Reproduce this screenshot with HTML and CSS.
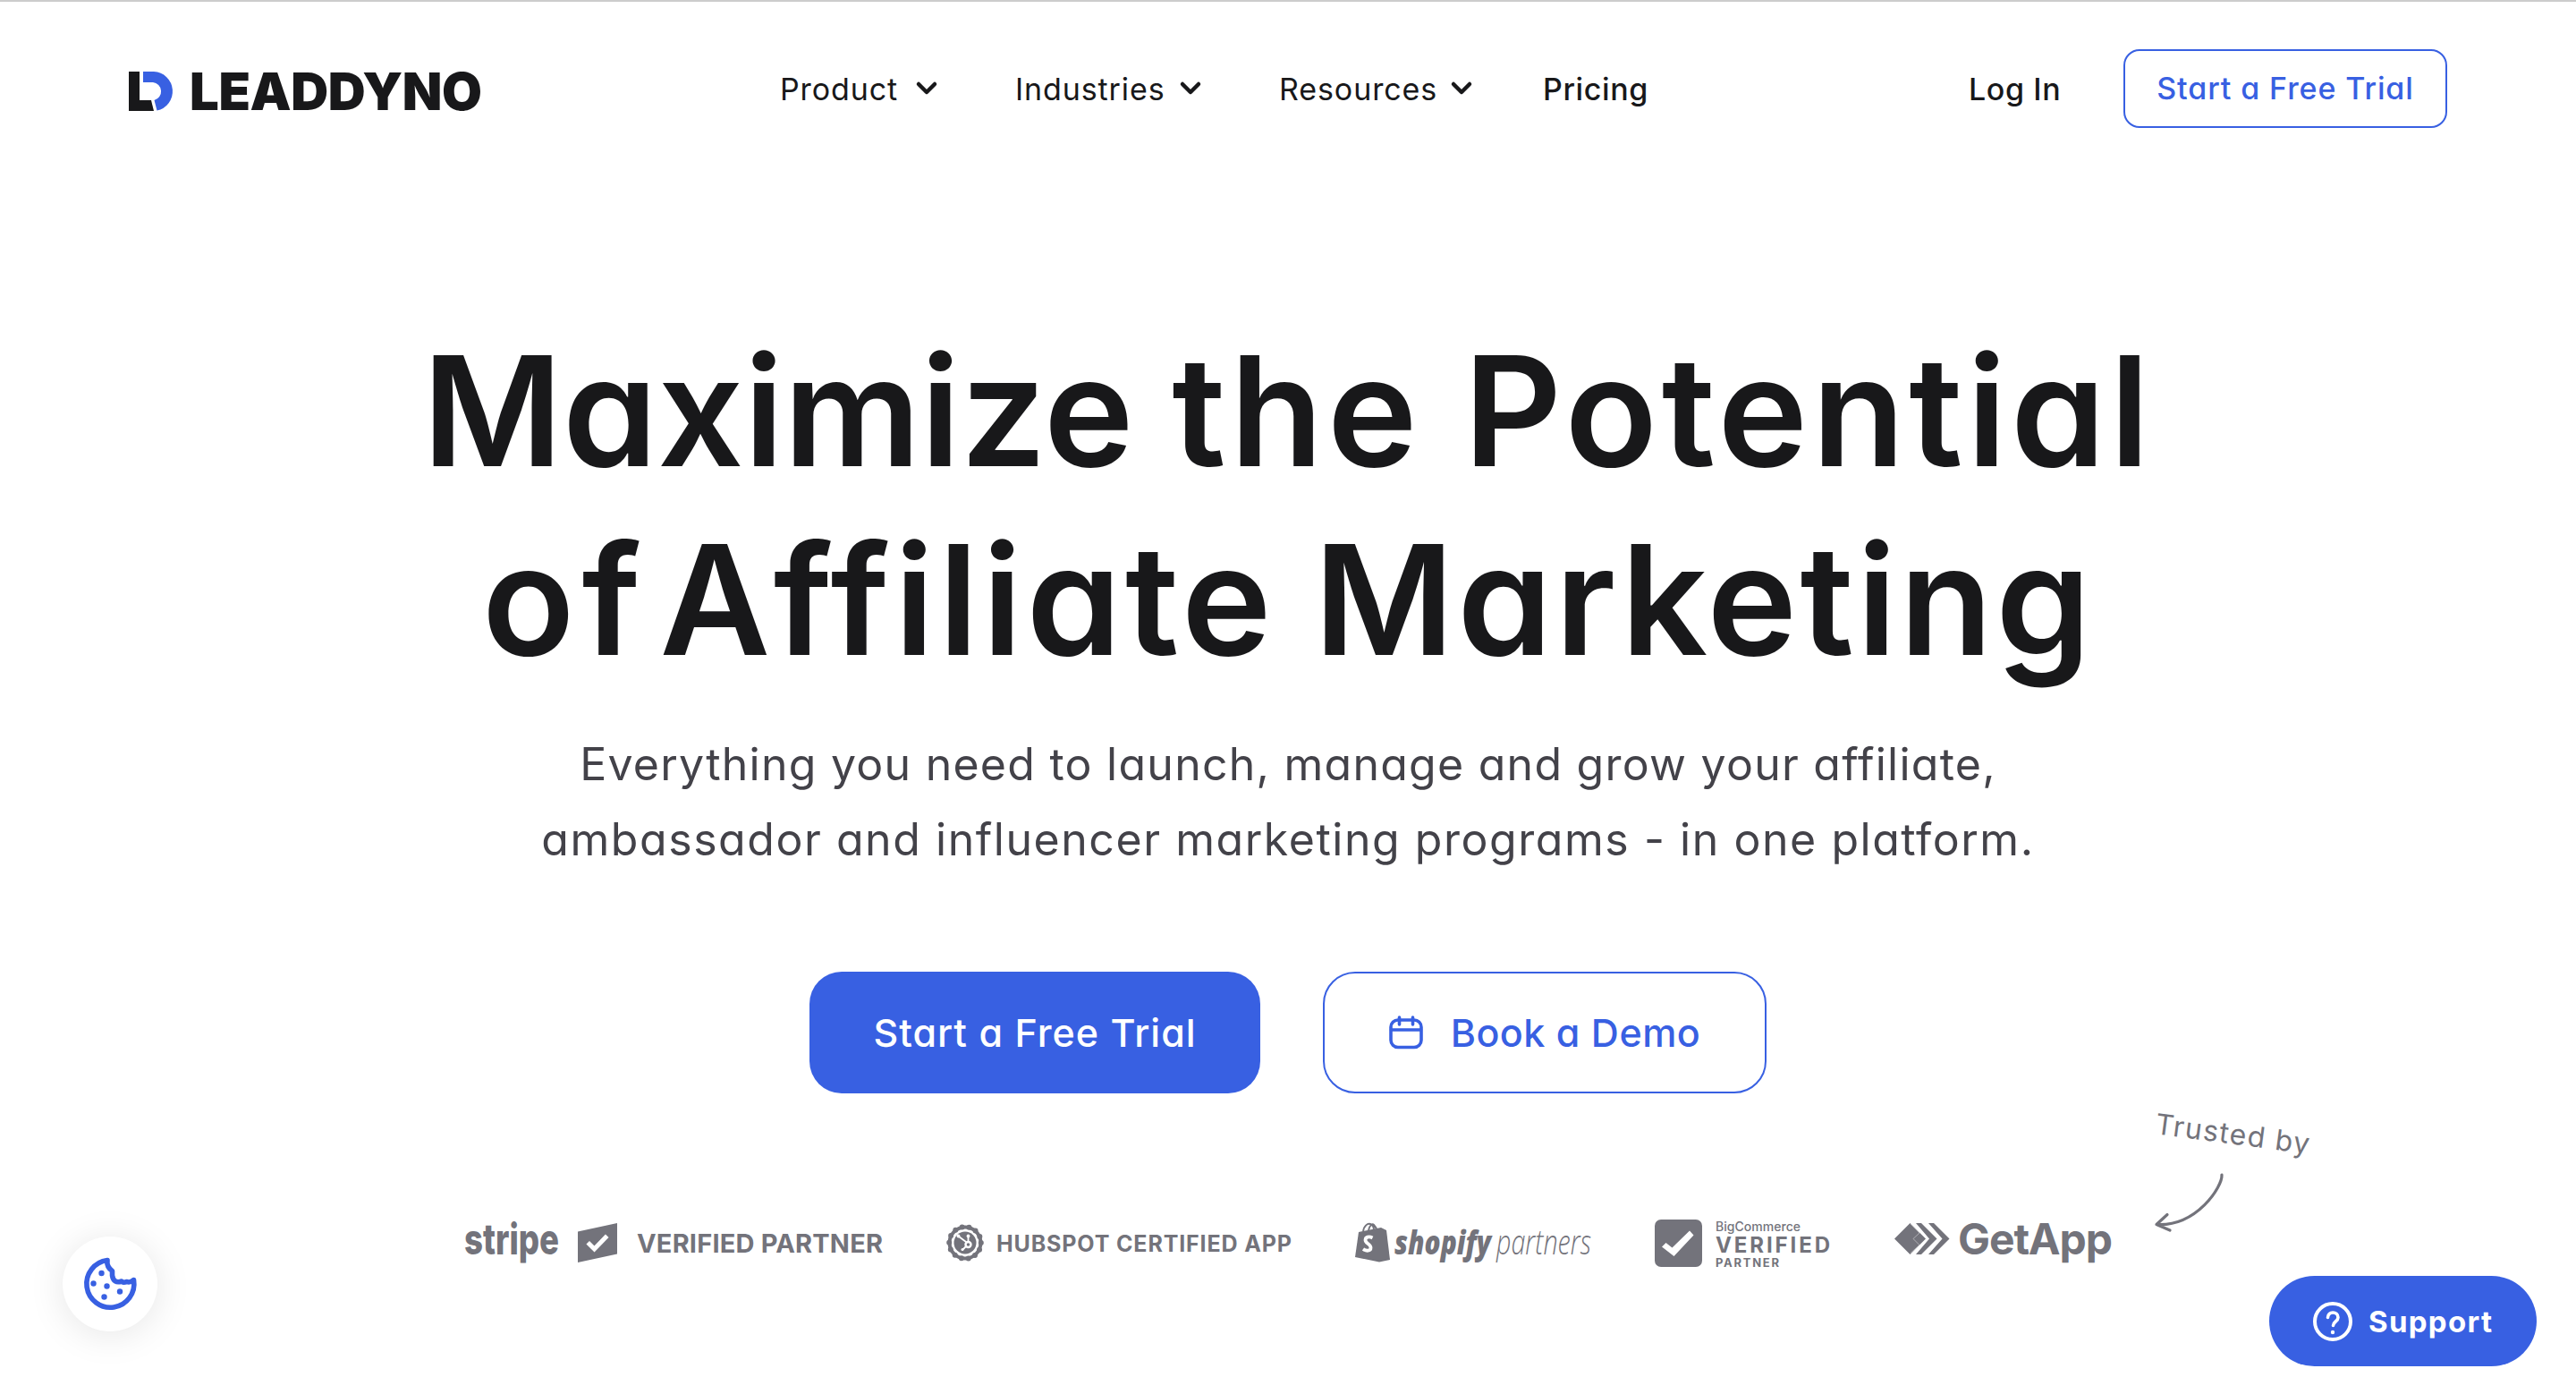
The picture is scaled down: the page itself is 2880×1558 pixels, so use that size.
FILE: index.html
```
<!DOCTYPE html>
<html lang="en">
<head>
  <meta charset="UTF-8">
  <title>LeadDyno</title>
  <link rel="stylesheet" href="styles.css">
</head>
<body>
  <header class="header">
    <a class="logo">
      <svg width="400" height="60" viewBox="0 0 400 60">
        <path fill="#18181a" d="M0 8h12v32h13l3 12H0z"/>
        <path fill="#3860e2" d="M16 8h12a22 22 0 0 1 3.500 43.500L28.500 40A10.200 10.200 0 0 0 27 20H16z"/>
        <text class="logo-text" x="68" y="51" textLength="327">LEADDYNO</text>
      </svg>
    </a>

    <nav class="nav">
      <a class="nav-item product">Product
        <svg class="chevron" width="24" height="16" viewBox="0 0 24 16"><path d="M3 3l9 9 9-9"/></svg>
      </a>
      <a class="nav-item industries">Industries
        <svg class="chevron" width="24" height="16" viewBox="0 0 24 16"><path d="M3 3l9 9 9-9"/></svg>
      </a>
      <a class="nav-item resources">Resources
        <svg class="chevron" width="24" height="16" viewBox="0 0 24 16"><path d="M3 3l9 9 9-9"/></svg>
      </a>
      <a class="nav-item pricing">Pricing</a>
    </nav>

    <div class="account">
      <a class="login">Log In</a>
      <a class="btn-small">Start a Free Trial</a>
    </div>
  </header>

  <main class="hero">
    <h1 class="title">Maximize <span class="wide">the Potential</span><br><span class="of">of</span> <span class="wide">Affiliate</span> <span class="semi-wide">Marketing</span></h1>
    <p class="subtitle">Everything you need to launch, manage and grow your affiliate,<br><span class="subtitle-wide">ambassador and influencer marketing programs - in one platform.</span></p>

    <div class="actions">
      <a class="btn btn-primary">Start a Free Trial</a>
      <a class="btn btn-outline">
        <svg width="38" height="38" viewBox="0 0 38 38" fill="none" stroke="#3860e2" stroke-width="3.600" stroke-linecap="round">
          <rect x="2" y="5" width="34" height="30.500" rx="8"/>
          <path d="M2.500 16h33M11.500 2v8M26.500 2v8"/>
        </svg>
        <span>Book a Demo</span>
      </a>
    </div>

    <div class="partners">
      <!-- Stripe -->
      <svg width="467" height="60" viewBox="0 0 467 60">
        <text class="stripe" x="-1" y="42" textLength="106" lengthAdjust="spacingAndGlyphs">stripe</text>
        <path d="M126 16.500l44-9.500v34.500L126 51z"/>
        <path class="check" d="M139 30.500l5.500 5.500 12.500-13" stroke-width="5"/>
        <text class="verified" x="192" y="40" textLength="275">VERIFIED PARTNER</text>
      </svg>
      <!-- HubSpot -->
      <svg width="386" height="60" viewBox="0 0 386 60">
        <circle cx="21" cy="29" r="17.400" fill="none" stroke="#73737b" stroke-width="4"/>
        <circle cx="21" cy="29" r="17.800" fill="none" stroke="#73737b" stroke-width="6" stroke-linecap="round" stroke-dasharray="0 7.989"/>
        <circle cx="21" cy="29" r="12.500"/>
        <g fill="none" stroke="#fff" stroke-width="1.800" stroke-linecap="round">
          <path d="M14 22l8 6M24.500 28v-6M22 33l-3.500 3.500"/>
          <circle cx="24.500" cy="31" r="3" stroke-width="2.400"/>
        </g>
        <circle cx="13.500" cy="21.500" r="1.900" fill="#fff"/>
        <circle cx="24.500" cy="21.500" r="1.900" fill="#fff"/>
        <circle cx="18" cy="36.500" r="1.500" fill="#fff"/>
        <text class="hubspot" x="56" y="39" textLength="330">HUBSPOT CERTIFIED APP</text>
      </svg>
      <!-- Shopify -->
      <svg width="264" height="60" viewBox="0 0 264 60">
        <path d="M4 17l25-5 6 3 4 33-12 2.500L0 45z"/>
        <path d="M9 16c1-6 5-9 8-8s4 3 4 7M15 15c1-5 4-8 6-6s3 3 3 6" fill="none" stroke="#73737b" stroke-width="2"/>
        <path d="M19.500 23.500c-4-2-8-1-8 2.500 0 4 6 4 6 8.500 0 4-5 4-8.500 1.500" fill="none" stroke="#fff" stroke-width="3.800"/>
        <text class="shopify" x="44" y="42" textLength="108" lengthAdjust="spacingAndGlyphs">shopify</text>
        <text class="shopify-light" x="158" y="42" textLength="106" lengthAdjust="spacingAndGlyphs">partners</text>
      </svg>
      <!-- BigCommerce -->
      <svg width="197" height="60" viewBox="0 0 197 60">
        <rect x="0" y="3" width="53" height="53" rx="7"/>
        <path d="M8 33.500l4.500-4.500 7 5.500L39 15.500l4.500 5L21.500 44z" fill="#fff"/>
        <text class="bc-small" x="68" y="16" textLength="95">BigCommerce</text>
        <text class="bc-big" x="68" y="40" textLength="128">VERIFIED</text>
        <text class="bc-partner" x="68" y="55.500" textLength="71">PARTNER</text>
      </svg>
      <!-- GetApp -->
      <svg width="244" height="60" viewBox="0 0 244 60">
        <path d="M0 24.500L17.500 7 35 24.500 17.500 42z"/>
        <path d="M24 7h6l17.500 17.500L30 42h-6l15-17.500zM38 7h6l17.500 17.500L44 42h-6l15.500-17.500z"/>
        <path d="M18 8l10 10-7 6.500 7 7-10 9" fill="none" stroke="#fff" stroke-width=".7" opacity=".6"/>
        <text class="getapp" x="71" y="41.500" textLength="173">GetApp</text>
      </svg>

      <div class="trusted">
        <span class="trusted-text">Trusted by</span>
        <svg class="trusted-arrow" width="80" height="72" viewBox="0 0 80 72">
          <path d="M76 5c1 13-28 58-73 55.500M15 49.500L3 60.500l15 6.500"/>
        </svg>
      </div>
    </div>
  </main>

  <button class="cookie">
    <svg width="60" height="60" viewBox="0 0 60 60">
      <path d="M27 3.500A26.500 26.500 0 1 0 56.500 25.500Q52 29 49 27.500 44 29 43 27 34 30 32.500 20.500V15.500Q26 11 27 3.500z" fill="none" stroke="#3860e2" stroke-width="5.600" stroke-linejoin="round"/>
      <g fill="#3860e2">
        <circle cx="20.500" cy="18" r="3.200"/>
        <circle cx="11.500" cy="29.500" r="3.200"/>
        <circle cx="26.500" cy="32.500" r="3.200"/>
        <circle cx="41" cy="38.500" r="3.200"/>
        <circle cx="23.500" cy="44.500" r="3.200"/>
      </g>
    </svg>
  </button>

  <button class="support">
    <svg width="44" height="44" viewBox="0 0 44 44" fill="none" stroke="#fff" stroke-linecap="round">
      <circle cx="22" cy="22" r="20" stroke-width="4"/>
      <path d="M16.500 17.500c0-7.500 11.500-7 11.500 0 0 4.500-5.500 4.500-5.500 9" stroke-width="3.600"/>
      <circle cx="22" cy="34" r="2.200" fill="#fff" stroke="none"/>
    </svg>
    <span>Support</span>
  </button>
</body>
</html>
```
FILE: styles.css
```
* {
  box-sizing: border-box;
}

body {
  margin: 0;
  height: 1558px;
  overflow: hidden;
  position: relative;
  background: #fff;
  border-top: 2px solid #ccc;
  color: #18181a;
  font-family: Inter, "Open Sans", sans-serif;
  font-feature-settings: "cv11";
}

svg {
  overflow: visible;
}

.header {
  display: flex;
  align-items: center;
  height: 194px;
  padding: 0 144px;
  font-size: 34px;
  letter-spacing: .9px;
}

.logo {
  width: 728px;
  height: 60px;
  margin-top: 6px;
}

.logo-text {
  font-size: 58px;
  font-weight: 900;
  letter-spacing: 0;
  fill: #18181a;
}

.nav {
  display: flex;
}

.nav-item {
  display: flex;
  align-items: center;
  justify-content: space-between;
}

.product {
  width: 176px;
  margin-right: 87px;
}

.industries {
  width: 208px;
  margin-right: 87px;
}

.resources {
  width: 216px;
  margin-right: 79px;
}

.pricing {
  font-weight: 500;
  letter-spacing: .6px;
}

.chevron {
  fill: none;
  stroke: #18181a;
  stroke-width: 4.5;
  stroke-linecap: round;
  stroke-linejoin: round;
}

.account {
  display: flex;
  align-items: center;
  margin-left: auto;
  font-weight: 500;
}

.login {
  width: 173px;
  letter-spacing: .6px;
}

.btn-small {
  width: 362px;
  height: 88px;
  border: 2px solid #3860e2;
  border-radius: 18px;
  color: #3860e2;
  line-height: 83px;
  text-align: center;
}

.hero {
  padding-top: 158px;
  text-align: center;
}

.title {
  margin: 0;
  font-size: 170px;
  line-height: 211px;
  font-weight: 600;
  white-space: nowrap;
}

.title .wide {
  letter-spacing: 4.6px;
}

.title .semi-wide {
  letter-spacing: 3.4px;
}

.title .of {
  margin-right: -30px;
  letter-spacing: 8px;
}

.subtitle {
  margin: 36px 0 106px;
  font-size: 50px;
  line-height: 84px;
  letter-spacing: 1.25px;
  color: #434249;
  white-space: nowrap;
}

.subtitle-wide {
  letter-spacing: 1.55px;
}

.actions {
  display: flex;
  justify-content: center;
  gap: 70px;
}

.btn {
  display: flex;
  align-items: center;
  justify-content: center;
  height: 136px;
  border-radius: 36px;
  font-size: 43px;
  font-weight: 500;
}

.btn-primary {
  width: 504px;
  background: #3860e2;
  color: #fff;
  letter-spacing: 1px;
}

.btn-outline {
  width: 496px;
  gap: 31px;
  border: 2px solid #3860e2;
  color: #3860e2;
  letter-spacing: .5px;
}

.partners {
  position: relative;
  display: flex;
  gap: 71px;
  height: 60px;
  margin-top: 138px;
  padding-left: 520px;
  fill: #73737b;
}

.partners svg {
  flex: none;
}

.check {
  fill: none;
  stroke: #fff;
  stroke-linecap: square;
}

.stripe {
  font-size: 48px;
  font-weight: 800;
}

.verified {
  font-size: 29px;
  font-weight: 700;
}

.hubspot {
  font-size: 25px;
  font-weight: 700;
}

.shopify {
  font-family: "Open Sans", sans-serif;
  font-size: 37px;
  font-weight: 800;
  font-style: italic;
}

.shopify-light {
  font-family: "Open Sans", sans-serif;
  font-size: 38px;
  font-weight: 300;
  font-style: italic;
}

.bc-small {
  font-size: 14px;
  font-weight: 500;
}

.bc-big {
  font-size: 24px;
  font-weight: 700;
}

.bc-partner {
  font-size: 13px;
  font-weight: 700;
}

.getapp {
  font-size: 48px;
  font-weight: 650;
}

.trusted {
  position: absolute;
  left: 2408px;
  top: -124px;
  color: #73737b;
}

.trusted-text {
  display: block;
  width: 180px;
  font-size: 32px;
  line-height: 40px;
  letter-spacing: 1.4px;
  text-align: left;
  white-space: nowrap;
  transform: rotate(7.5deg);
  transform-origin: 0 34px;
}

.trusted-arrow {
  display: block;
  margin-top: 32px;
  fill: none;
  stroke: #73737b;
  stroke-width: 3.2;
  stroke-linecap: round;
  stroke-linejoin: round;
}

.cookie {
  position: absolute;
  left: 70px;
  top: 1380px;
  display: flex;
  align-items: center;
  justify-content: center;
  width: 106px;
  height: 106px;
  padding: 0;
  border: 0;
  border-radius: 50%;
  background: #fff;
  box-shadow: 0 4px 40px rgba(0, 0, 0, .1);
}

.support {
  position: absolute;
  left: 2537px;
  top: 1424px;
  display: flex;
  align-items: center;
  gap: 18px;
  width: 299px;
  height: 101px;
  padding: 0 0 0 49px;
  border: 0;
  border-radius: 51px;
  background: #3860e2;
  color: #fff;
  font-family: Inter, sans-serif;
  font-size: 33px;
  font-weight: 700;
  letter-spacing: 1.3px;
}
```
